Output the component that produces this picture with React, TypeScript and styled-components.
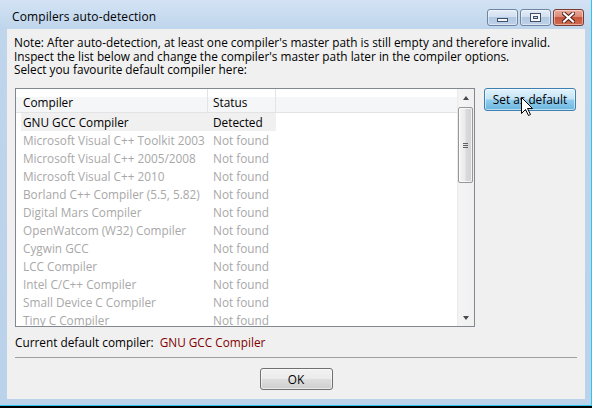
import React from "react";
import styled, { createGlobalStyle } from "styled-components";

const GlobalStyle = createGlobalStyle`
  html, body { margin: 0; padding: 0; background: #000; }
  body {
    width: 592px; height: 408px; overflow: hidden;
    font-family: "Open Sans", "Noto Sans", sans-serif;
    font-size: 11.8px; color: #000;
  }
`;

const Screen = styled.div`
  position: relative;
  width: 592px;
  height: 408px;
  background: #000;
`;

const Frame = styled.div`
  box-sizing: border-box;
  width: 592px;
  height: 406px;
  background: linear-gradient(#d3e3f4 0px, #bfd5ec 29px, #bad2ea 100%);
  border-right: 1px solid #2bc6ef;
  border-bottom: 1px solid #2bc6ef;
  display: flex;
  flex-direction: column;
`;

const TitleBar = styled.div`
  height: 29px;
  box-sizing: border-box;
  display: flex;
  align-items: flex-start;
  padding: 0 7px 0 12px;
`;

const Title = styled.div`
  margin-top: 9px;
  font-size: 12px;
  line-height: 16px;
  color: #000;
  letter-spacing: 0.1px;
`;

const Controls = styled.div`
  margin-left: auto;
  margin-top: 9px;
  display: flex;
  gap: 2px;
`;

const CaptionButton = styled.div<{ $close?: boolean }>`
  box-sizing: border-box;
  width: 31px;
  height: 17px;
  border-radius: 3px;
  display: flex;
  align-items: center;
  justify-content: center;
  border: 1px solid ${(p) => (p.$close ? "#7a3a30" : "#6d85a3")};
  box-shadow: inset 0 0 0 1px rgba(255, 255, 255, 0.45);
  background: ${(p) =>
    p.$close
      ? "linear-gradient(#e9a99a 0%, #dc8a77 45%, #c8553d 50%, #d06a50 100%)"
      : "linear-gradient(#e4ecf6 0%, #d3e0f0 45%, #b3c8e2 50%, #bed1e8 100%)"};
`;

const MinGlyph = styled.div`
  box-sizing: border-box;
  width: 11px;
  height: 4px;
  margin-top: 5px;
  background: #f3f6fa;
  border: 1px solid #3f5069;
`;

const MaxGlyph = styled.div`
  box-sizing: border-box;
  width: 11px;
  height: 9px;
  border: 1px solid #3f5069;
  padding: 2px;
  background: #f6f8fb;
  display: flex;
`;

const MaxInner = styled.div`
  flex: 1;
  border: 1px solid #3f5069;
  background: #c9d8ea;
`;

const Client = styled.div`
  margin: 0 6px 0 7px;
  height: 370px;
  background: #f0f0f0;
  display: flex;
  flex-direction: column;
`;

const Note = styled.div`
  box-sizing: border-box;
  height: 59px;
  padding: 7px 0 0 7px;
  line-height: 13.7px;
  white-space: nowrap;
`;

const MainRow = styled.div`
  display: flex;
  align-items: flex-start;
  gap: 9px;
  padding-left: 8px;
`;

const ListBox = styled.div`
  box-sizing: border-box;
  width: 460px;
  height: 239px;
  border: 1px solid #828790;
  background: #fff;
  display: flex;
  overflow: hidden;
`;

const ListContent = styled.div`
  flex: 1;
  display: flex;
  flex-direction: column;
  overflow: hidden;
`;

const Header = styled.div`
  height: 24px;
  flex: none;
  box-sizing: border-box;
  display: flex;
  border-bottom: 1px solid #e2e3e5;
  background: linear-gradient(#ffffff 0, #ffffff 8px, #f5f6f7 8px, #f5f6f7 100%);
`;

const HeaderCell = styled.div<{ $w: number; $pad: number }>`
  box-sizing: border-box;
  width: ${(p) => p.$w}px;
  padding-left: ${(p) => p.$pad}px;
  padding-top: 2px;
  line-height: 22px;
  border-right: 1px solid #e3e4e6;
  white-space: nowrap;
`;

const Row = styled.div<{ $selected?: boolean; $enabled?: boolean }>`
  flex: none;
  display: flex;
  height: 18px;
  width: 255px;
  margin-left: 5px;
  line-height: 19px;
  background: ${(p) => (p.$selected ? "#f0f0f0" : "transparent")};
  color: ${(p) => (p.$enabled ? "#000" : "#a8a8a8")};
  white-space: nowrap;
`;

const Cell = styled.div<{ $w: number; $pad: number }>`
  box-sizing: border-box;
  width: ${(p) => p.$w}px;
  padding-left: ${(p) => p.$pad}px;
  overflow: hidden;
`;

const ScrollBar = styled.div`
  width: 17px;
  flex: none;
  display: flex;
  flex-direction: column;
  background: linear-gradient(90deg, #e9e9e9 0, #f4f4f4 2px, #f0f0f0 100%);
`;

const ArrowButton = styled.div`
  height: 17px;
  flex: none;
  display: flex;
  align-items: center;
  justify-content: center;
`;

const Triangle = styled.div<{ $down?: boolean }>`
  width: 0;
  height: 0;
  border-left: 3.5px solid transparent;
  border-right: 3.5px solid transparent;
  ${(p) => (p.$down ? "border-top: 4px solid #4a4a4a;" : "border-bottom: 4px solid #4a4a4a;")}
`;

const Track = styled.div`
  flex: 1;
  padding: 1px 1px 0 1px;
`;

const Thumb = styled.div`
  box-sizing: border-box;
  height: 76px;
  border: 1px solid #979797;
  border-radius: 2px;
  background: linear-gradient(90deg, #f4f4f4 0%, #ebebeb 45%, #dadada 55%, #d3d3d3 100%);
  box-shadow: inset 0 0 0 1px rgba(255, 255, 255, 0.7);
  display: flex;
  align-items: center;
  justify-content: center;
`;

const Grip = styled.div`
  width: 5px;
  height: 5px;
  background: repeating-linear-gradient(#5f5f5f 0, #5f5f5f 1px, transparent 1px, transparent 2px);
`;

const PushButton = styled.button<{ $hot?: boolean; $w: number; $h: number }>`
  box-sizing: border-box;
  width: ${(p) => p.$w}px;
  height: ${(p) => p.$h}px;
  padding: 0;
  font-family: inherit;
  font-size: 11.8px;
  color: #000;
  border-radius: 3px;
  border: 1px solid ${(p) => (p.$hot ? "#3c7fb1" : "#707070")};
  box-shadow: inset 0 0 0 1px rgba(255, 255, 255, 0.55);
  background: ${(p) =>
    p.$hot
      ? "linear-gradient(#e3f3fc 0%, #c2e3f6 48%, #93cdee 52%, #6ab6e0 100%)"
      : "linear-gradient(#f2f2f2 0%, #ebebeb 48%, #dddddd 52%, #cfcfcf 100%)"};
  line-height: ${(p) => p.$h - 2}px;
`;

const CurrentRow = styled.div`
  margin-top: 8px;
  padding-left: 8px;
  height: 14px;
  line-height: 14px;
  display: flex;
  gap: 6px;
`;

const Highlight = styled.span`
  color: #800000;
`;

const Separator = styled.div`
  margin: 8px 0 0 8px;
  width: 562px;
  height: 1px;
  background: #a0a0a0;
`;

const Footer = styled.div`
  margin-top: 10px;
  display: flex;
  justify-content: center;
`;

const Cursor = styled.svg`
  position: absolute;
  left: 521px;
  top: 97px;
`;

const compilers: [string, string][] = [
  ["GNU GCC Compiler", "Detected"],
  ["Microsoft Visual C++ Toolkit 2003", "Not found"],
  ["Microsoft Visual C++ 2005/2008", "Not found"],
  ["Microsoft Visual C++ 2010", "Not found"],
  ["Borland C++ Compiler (5.5, 5.82)", "Not found"],
  ["Digital Mars Compiler", "Not found"],
  ["OpenWatcom (W32) Compiler", "Not found"],
  ["Cygwin GCC", "Not found"],
  ["LCC Compiler", "Not found"],
  ["Intel C/C++ Compiler", "Not found"],
  ["Small Device C Compiler", "Not found"],
  ["Tiny C Compiler", "Not found"],
];

export default function App() {
  return (
    <Screen>
      <GlobalStyle />
      <Frame>
        <TitleBar>
          <Title>Compilers auto-detection</Title>
          <Controls>
            <CaptionButton>
              <MinGlyph />
            </CaptionButton>
            <CaptionButton>
              <MaxGlyph>
                <MaxInner />
              </MaxGlyph>
            </CaptionButton>
            <CaptionButton $close>
              <svg width="13" height="11" viewBox="0 0 13 11">
                <path d="M2 1.5 L11 9.5 M11 1.5 L2 9.5" stroke="#4a1b14" strokeWidth="4" strokeLinecap="square" />
                <path d="M2 1.5 L11 9.5 M11 1.5 L2 9.5" stroke="#ffffff" strokeWidth="2.2" strokeLinecap="square" />
              </svg>
            </CaptionButton>
          </Controls>
        </TitleBar>
        <Client>
          <Note>
            Note: After auto-detection, at least one compiler's master path is still empty and therefore invalid.
            <br />
            Inspect the list below and change the compiler's master path later in the compiler options.
            <br />
            Select you favourite default compiler here:
          </Note>
          <MainRow>
            <ListBox>
              <ListContent>
                <Header>
                  <HeaderCell $w={192} $pad={7}>Compiler</HeaderCell>
                  <HeaderCell $w={68} $pad={5}>Status</HeaderCell>
                </Header>
                {compilers.map(([name, status], i) => (
                  <Row key={name} $selected={i === 0} $enabled={status === "Detected"}>
                    <Cell $w={187} $pad={2}>{name}</Cell>
                    <Cell $w={68} $pad={5}>{status}</Cell>
                  </Row>
                ))}
              </ListContent>
              <ScrollBar>
                <ArrowButton>
                  <Triangle />
                </ArrowButton>
                <Track>
                  <Thumb>
                    <Grip />
                  </Thumb>
                </Track>
                <ArrowButton>
                  <Triangle $down />
                </ArrowButton>
              </ScrollBar>
            </ListBox>
            <PushButton $hot $w={92} $h={23}>Set as default</PushButton>
          </MainRow>
          <CurrentRow>
            <span>Current default compiler:</span>
            <Highlight>GNU GCC Compiler</Highlight>
          </CurrentRow>
          <Separator />
          <Footer>
            <PushButton $w={73} $h={22}>OK</PushButton>
          </Footer>
        </Client>
      </Frame>
      <Cursor width="13" height="20" viewBox="0 0 13 20">
        <path d="M0.5 0.5 L0.5 16.5 L4.5 12.5 L7.5 18.5 L9.5 17.5 L6.5 11.5 L11.5 11.5 Z" fill="#fff" stroke="#000" strokeWidth="1" />
      </Cursor>
    </Screen>
  );
}
